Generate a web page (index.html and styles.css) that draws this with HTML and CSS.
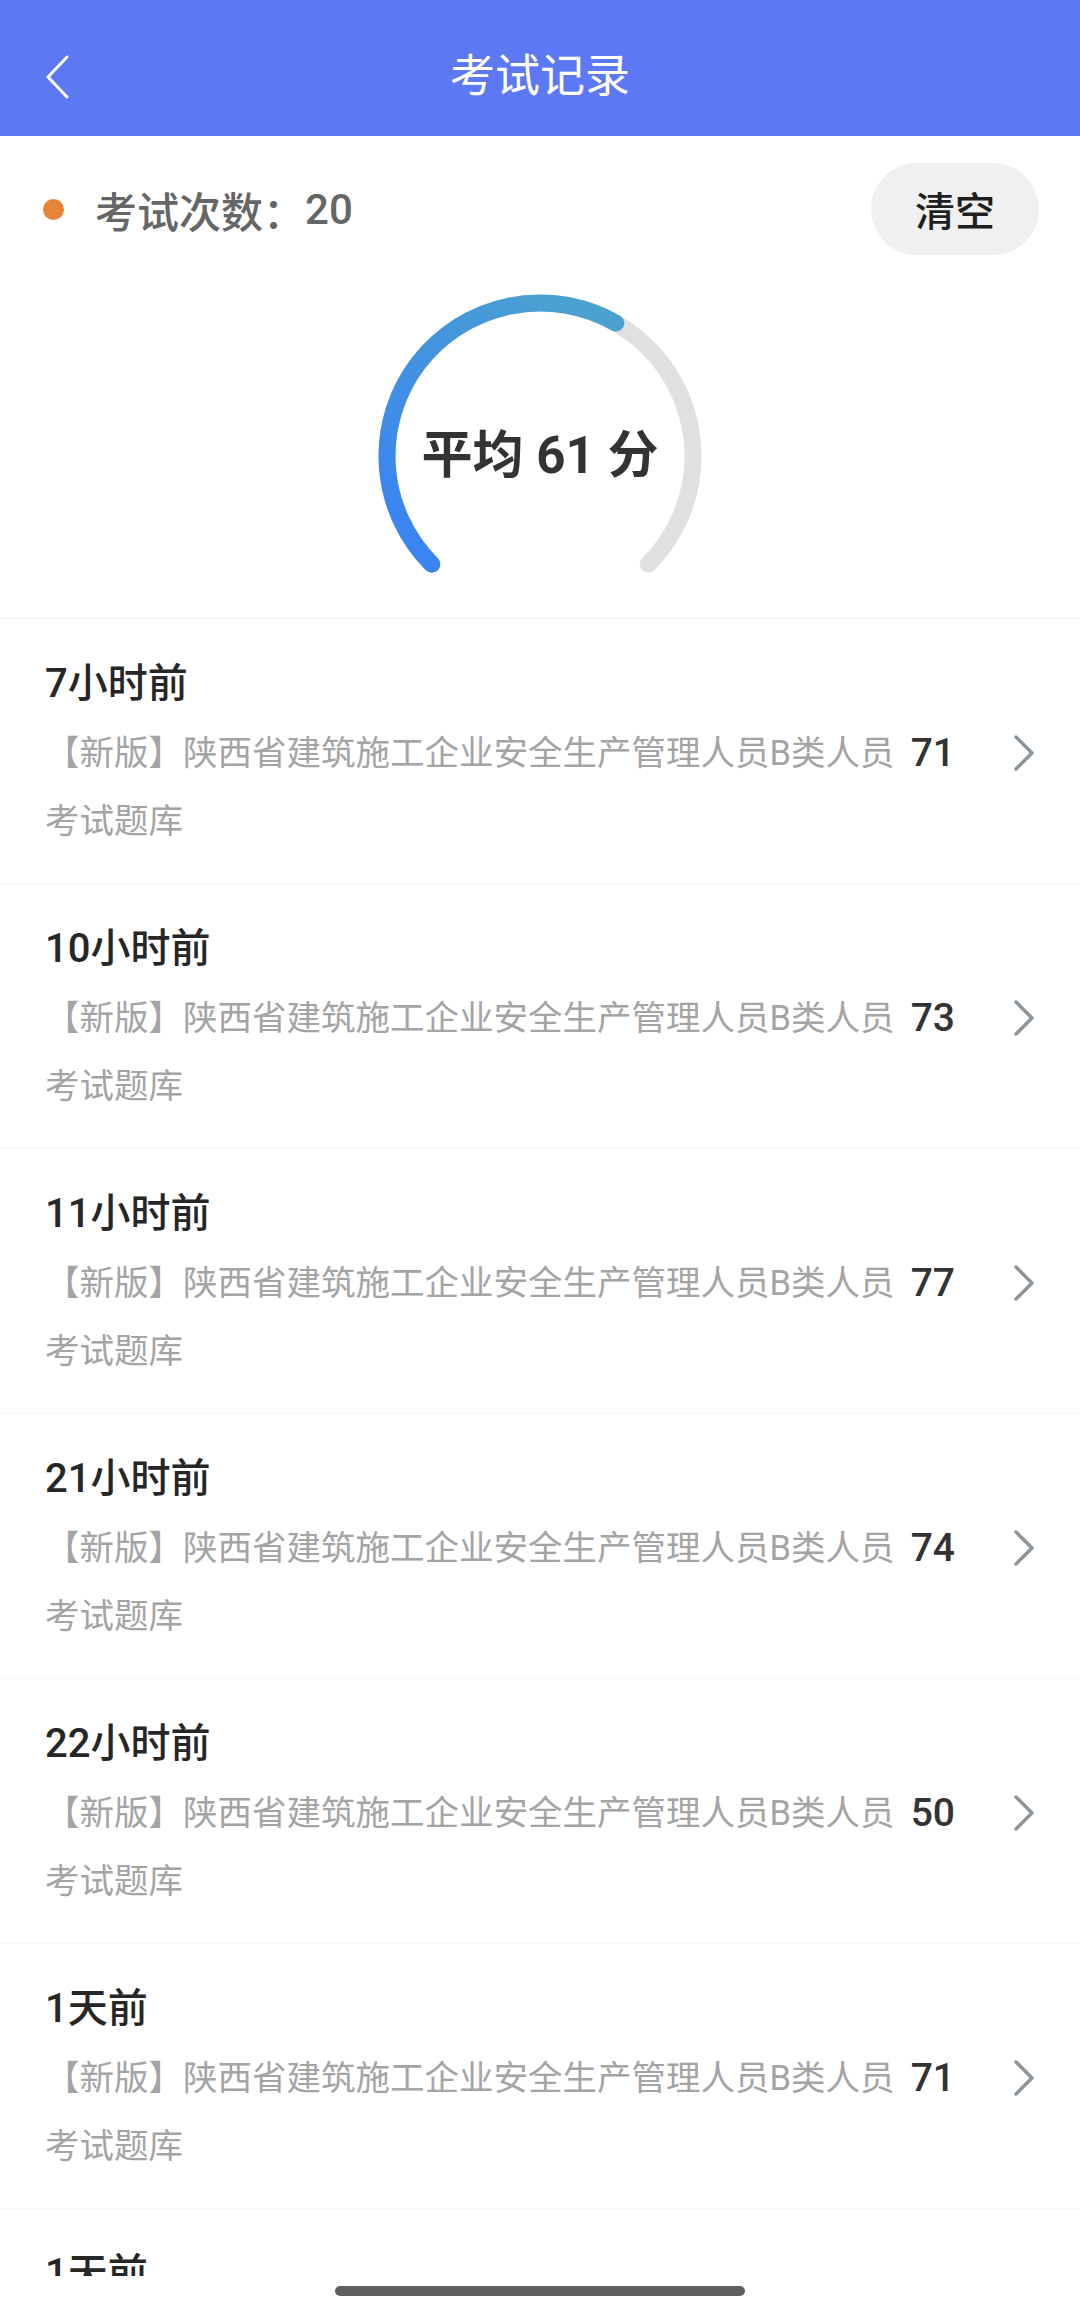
FILE: index.html
```html
<!DOCTYPE html>
<html lang="zh-CN">
<head>
    <meta charset="UTF-8">
    <meta name="viewport" content="width=device-width, initial-scale=1.0">
    <title>考试记录</title>
    <link rel="stylesheet" href="styles.css">
</head>
<body>

<div class="screen">
    <!-- 顶部导航 -->
    <header class="topbar">
        <button class="back-button">
            <svg width="26" height="44" viewBox="0 0 26 44">
                <polyline points="22,2 3,22 22,42" fill="none" stroke="#fff" stroke-width="3" stroke-linecap="round" stroke-linejoin="round"/>
            </svg>
        </button>
        <h1 class="title">考试记录</h1>
        <span></span>
    </header>

    <main class="content">
        <!-- 次数 + 清空 -->
        <section class="summary">
            <div class="count"><span class="dot"></span>考试次数：<span id="examCount">20</span></div>
            <button class="clear-button">清空</button>
        </section>

        <!-- 平均分仪表 -->
        <section class="gauge">
            <div class="gauge-box">
                <svg width="340" height="300" viewBox="0 0 340 300">
                    <defs>
                        <linearGradient id="arcGradient" gradientUnits="userSpaceOnUse" x1="60" y1="280" x2="250" y2="40">
                            <stop offset="0" stop-color="#3a83f3"/>
                            <stop offset="1" stop-color="#4ba2cf"/>
                        </linearGradient>
                    </defs>
                    <path d="M 61.8 278.2 A 153 153 0 1 1 278.2 278.2" fill="none" stroke="#e0e0e0" stroke-width="17" stroke-linecap="round"/>
                    <path id="scoreArc" d="" fill="none" stroke="url(#arcGradient)" stroke-width="17" stroke-linecap="round"/>
                </svg>
                <div class="gauge-label">平均 <span id="avgScore">61</span> 分</div>
            </div>
        </section>

        <!-- 记录列表 -->
        <div class="record-list" id="recordList"></div>
    </main>

    <div class="home-bar"><span class="home-indicator"></span></div>
</div>

<script>
    var records = [
        { time: '7小时前', score: 71 },
        { time: '10小时前', score: 73 },
        { time: '11小时前', score: 77 },
        { time: '21小时前', score: 74 },
        { time: '22小时前', score: 50 },
        { time: '1天前', score: 71 },
        { time: '1天前', score: 68 }
    ];
    var bankName = '【新版】陕西省建筑施工企业安全生产管理人员B类人员考试题库';

    function drawArc(percent) {
        // 270度的仪表，从左下角顺时针
        var cx = 170, cy = 170, r = 153;
        var start = -135 * Math.PI / 180;
        var end = (-135 + 270 * percent / 100) * Math.PI / 180;
        var x1 = cx + r * Math.sin(start), y1 = cy - r * Math.cos(start);
        var x2 = cx + r * Math.sin(end), y2 = cy - r * Math.cos(end);
        var large = 270 * percent / 100 > 180 ? 1 : 0;
        document.getElementById('scoreArc').setAttribute('d',
            'M ' + x1 + ' ' + y1 + ' A ' + r + ' ' + r + ' 0 ' + large + ' 1 ' + x2 + ' ' + y2);
    }

    function renderRecords() {
        var list = document.getElementById('recordList');
        list.innerHTML = '';

        records.forEach(function(record) {
            var item = document.createElement('div');
            item.classList.add('record');

            var time = document.createElement('div');
            time.classList.add('record-time');
            time.innerText = record.time;

            var body = document.createElement('div');
            body.classList.add('record-body');

            var name = document.createElement('div');
            name.classList.add('record-name');
            name.innerText = bankName;

            var score = document.createElement('div');
            score.classList.add('record-score');
            score.innerText = record.score;

            var arrow = document.createElement('div');
            arrow.classList.add('record-arrow');
            arrow.innerHTML = '<svg width="22" height="38" viewBox="0 0 22 38"><polyline points="3,3 19,19 3,35" fill="none" stroke="#8c959b" stroke-width="3.5" stroke-linecap="round" stroke-linejoin="round"/></svg>';

            body.appendChild(name);
            body.appendChild(score);
            body.appendChild(arrow);
            item.appendChild(time);
            item.appendChild(body);
            list.appendChild(item);
        });
    }

    drawArc(61);
    renderRecords();
</script>

</body>
</html>
```

FILE: styles.css
```css
body {
    margin: 0;
    padding: 0;
    background-color: #fff;
    font-family: Roboto, "Noto Sans CJK SC", sans-serif;
}

.screen {
    width: 1080px;
    height: 2317px;
    display: flex;
    flex-direction: column;
    overflow: hidden;
}

.topbar {
    flex-shrink: 0;
    height: 118px;
    padding: 18px 45px 0 45px;
    background-color: #5c78f2;
    display: grid;
    grid-template-columns: 1fr auto 1fr;
    align-items: center;
}

.back-button {
    background: none;
    border: none;
    padding: 0;
    width: 26px;
    height: 44px;
    display: flex;
}

.title {
    margin: 0;
    color: #fff;
    font-size: 45px;
    font-weight: 400;
    line-height: 60px;
}

.content {
    flex: 1;
    min-height: 0;
    overflow: hidden;
}

.summary {
    display: flex;
    justify-content: space-between;
    align-items: center;
    padding: 27px 41px 0 43px;
}

.count {
    display: flex;
    align-items: center;
    font-size: 42px;
    font-weight: 500;
    color: #666;
}

.dot {
    width: 21px;
    height: 21px;
    border-radius: 50%;
    background-color: #e6843a;
    margin-right: 31px;
}

.clear-button {
    width: 168px;
    height: 92px;
    border: none;
    border-radius: 46px;
    background-color: #f0f0f0;
    color: #1f1f1f;
    font-family: inherit;
    font-size: 40px;
    font-weight: 500;
    padding: 0;
}

.gauge {
    padding: 31px 0 32px;
    border-bottom: 1px solid #f0f0f0;
}

.gauge-box {
    width: 340px;
    height: 300px;
    margin: 0 auto;
    display: grid;
}

.gauge-box svg,
.gauge-label {
    grid-area: 1 / 1;
}

.gauge-label {
    place-self: start center;
    margin-top: 140px;
    line-height: 60px;
    font-size: 51px;
    font-weight: 700;
    color: #333;
}

.record {
    padding: 37px 45px 28px 45px;
    border-bottom: 1px solid #f6f6f6;
}

.record-time {
    font-size: 40px;
    font-weight: 500;
    line-height: 56px;
    color: #262626;
}

.record-body {
    display: flex;
    align-items: flex-start;
    margin-top: 7px;
}

.record-name {
    flex: 1;
    font-size: 34.5px;
    line-height: 68px;
    color: #a4a4a4;
}

.record-score {
    width: 52px;
    text-align: right;
    font-size: 39px;
    font-weight: 500;
    line-height: 68px;
    color: #333;
}

.record-arrow {
    width: 80px;
    height: 68px;
    display: flex;
    align-items: center;
    justify-content: flex-end;
}

.home-bar {
    flex-shrink: 0;
    height: 41px;
    background-color: #fff;
    display: flex;
    justify-content: center;
    align-items: flex-start;
}

.home-indicator {
    margin-top: 10px;
    width: 410px;
    height: 10px;
    border-radius: 5px;
    background-color: #606060;
}
```
